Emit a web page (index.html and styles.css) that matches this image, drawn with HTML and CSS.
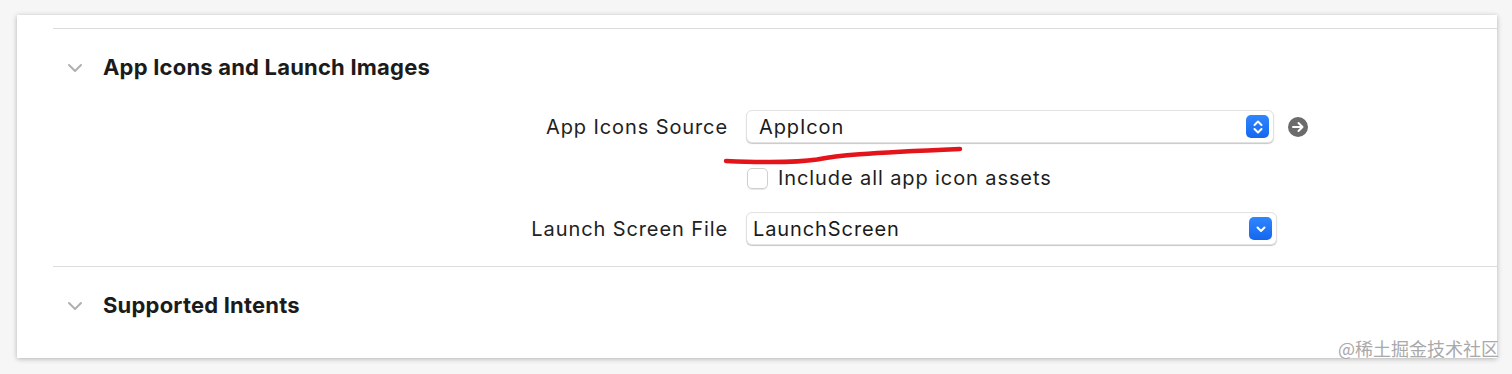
FILE: index.html
```html
<!DOCTYPE html>
<html lang="en">

<head>
    <meta charset="UTF-8">
    <meta name="viewport" content="width=device-width, initial-scale=1.0">
    <title>App Icons and Launch Images</title>
    <link rel="stylesheet" href="styles.css">
</head>

<body>
<div class="panel">
    <!-- App icons section -->
    <section class="section">
        <div class="section-head">
            <svg class="chevron" width="16" height="10" viewBox="0 0 16 10"><path d="M2 2 L8 8 L14 2" fill="none" stroke="#b0b0b0" stroke-width="2" stroke-linecap="round" stroke-linejoin="round"/></svg>
            <h2>App Icons and Launch Images</h2>
        </div>

        <div class="form">
            <div class="row">
                <label class="label">App Icons Source</label>
                <div class="popup popup-source">
                    <span class="popup-text">AppIcon</span>
                    <span class="stepper">
                        <svg width="12" height="18" viewBox="0 0 12 18"><path d="M2.5 7 L6 3.5 L9.5 7 M2.5 11 L6 14.5 L9.5 11" fill="none" stroke="#fff" stroke-width="2" stroke-linecap="round" stroke-linejoin="round"/></svg>
                    </span>
                </div>
                <span class="go">
                    <svg width="20" height="20" viewBox="0 0 20 20"><circle cx="10" cy="10" r="10" fill="#6b6b6b"/><path d="M5 10 H14.5 M10.5 6 L14.5 10 L10.5 14" fill="none" stroke="#fff" stroke-width="2" stroke-linecap="round" stroke-linejoin="round"/></svg>
                </span>
            </div>

            <div class="row row-check">
                <span></span>
                <label class="check">
                    <span class="box"></span>
                    <span>Include all app icon assets</span>
                </label>
            </div>

            <div class="row">
                <label class="label">Launch Screen File</label>
                <div class="popup popup-launch">
                    <span class="popup-text">LaunchScreen</span>
                    <span class="stepper">
                        <svg width="12" height="12" viewBox="0 0 12 12"><path d="M2.5 4.5 L6 8 L9.5 4.5" fill="none" stroke="#fff" stroke-width="2" stroke-linecap="round" stroke-linejoin="round"/></svg>
                    </span>
                </div>
            </div>
        </div>
    </section>

    <!-- Supported intents section -->
    <section class="section section-last">
        <div class="section-head">
            <svg class="chevron" width="16" height="10" viewBox="0 0 16 10"><path d="M2 2 L8 8 L14 2" fill="none" stroke="#b0b0b0" stroke-width="2" stroke-linecap="round" stroke-linejoin="round"/></svg>
            <h2>Supported Intents</h2>
        </div>
    </section>

    <!-- hand-drawn red mark over the form -->
    <svg class="scribble" width="242" height="20" viewBox="0 0 242 20"><path d="M3 16 C 40 17.5, 78 17, 94 14.5 C 114 10.5, 140 8, 237 4" fill="none" stroke="#e3141a" stroke-width="4.5" stroke-linecap="round"/></svg>

    <span class="watermark">@稀土掘金技术社区</span>
</div>
</body>

</html>
```

FILE: styles.css
```css
* {
    box-sizing: border-box;
    margin: 0;
    padding: 0;
}

body {
    font-family: Inter, "Noto Sans", sans-serif;
    background-color: #f6f6f6;
    color: #1e1e1e;
    height: 374px;
    overflow: hidden;
}

.panel {
    position: relative;
    background-color: #fff;
    width: 1480px;
    margin: 15px 0 0 17px;
    padding: 13px 0 0 36px;
    box-shadow: 0 1px 5px rgba(0, 0, 0, 0.28);
}

.section {
    border-top: 1px solid #dcdcdc;
    padding: 18px 0 21px;
}

.section-last {
    padding-bottom: 33px;
}

.section-head {
    display: flex;
    align-items: center;
    height: 40px;
    padding-left: 14px;
    gap: 20px;
}

.chevron {
    display: block;
    margin-top: 1px;
}

h2 {
    font-size: 22px;
    font-weight: 700;
    color: #1b1b1b;
    letter-spacing: 0.2px;
}

.form {
    display: flex;
    flex-direction: column;
    gap: 23px;
    padding-top: 23px;
}

.row {
    display: grid;
    grid-template-columns: 675px max-content max-content;
    justify-content: start;
    align-items: center;
    column-gap: 18px;
}

.row-check {
    margin-top: 1px;
}

.label {
    text-align: right;
    font-size: 20px;
    letter-spacing: 0.9px;
    color: #222;
}

.popup {
    display: flex;
    align-items: center;
    justify-content: space-between;
    height: 33px;
    background-color: #fff;
    border: 1px solid #e2e2e2;
    border-radius: 6px;
    box-shadow: 0 1px 1px rgba(0, 0, 0, 0.22);
    font-size: 20px;
    letter-spacing: 0.9px;
    color: #1b1b1b;
}

.popup-source {
    width: 528px;
    padding: 0 4px 0 12px;
}

.popup-launch {
    width: 531px;
    padding: 0 4px 0 6px;
}

.stepper {
    display: flex;
    align-items: center;
    justify-content: center;
    width: 23px;
    height: 23px;
    border-radius: 5px;
    background: linear-gradient(#2f86ff, #1567ee);
}

.go {
    display: block;
    height: 20px;
    margin-left: -4px;
}

.go svg {
    display: block;
}

.check {
    display: flex;
    align-items: center;
    gap: 10px;
    height: 22px;
    line-height: 22px;
    font-size: 20px;
    letter-spacing: 0.9px;
    color: #1e1e1e;
    margin-left: 1px;
}

.box {
    width: 21px;
    height: 21px;
    border: 1px solid #cfcfcf;
    border-radius: 5px;
    box-shadow: 0 1px 1px rgba(0, 0, 0, 0.1);
}

.scribble {
    position: absolute;
    left: 706px;
    top: 130px;
}

.watermark {
    position: absolute;
    right: -2px;
    bottom: -3px;
    font-family: "Noto Sans CJK SC", sans-serif;
    font-size: 18px;
    color: #a9a9a9;
    text-shadow: 0 0 1px #fff;
}
```
